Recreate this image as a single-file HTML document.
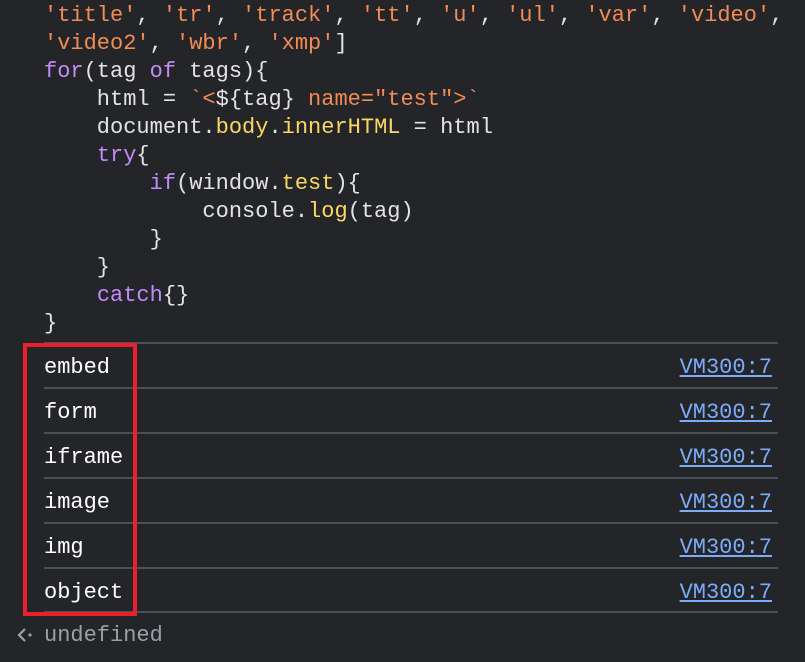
<html><head><style>
body{margin:0;background:#232529;width:805px;height:662px;overflow:hidden;font-family:"Liberation Mono",monospace;font-size:22px;color:#e3e3e3}
.code{position:absolute;left:44px;top:0;white-space:pre;line-height:28px}
.s{color:#f28b54}.k{color:#c58af9}.p{color:#fdd663}.t{color:#d5d9de}
.row{position:absolute;left:44px;width:734px;height:45px;border-top:2px solid #4a5059;box-sizing:border-box}
.row span{position:absolute;left:0;top:11px;color:#fff}
.row a{position:absolute;right:6px;top:11px;color:#7cacf8;text-decoration:underline}
.box{position:absolute;left:23px;top:343px;width:114px;height:273px;border:4px solid #e8212a;box-sizing:border-box}
</style></head><body>
<div class="code" style="top:2px"><span class="s">'title'</span>, <span class="s">'tr'</span>, <span class="s">'track'</span>, <span class="s">'tt'</span>, <span class="s">'u'</span>, <span class="s">'ul'</span>, <span class="s">'var'</span>, <span class="s">'video'</span>,
<span class="s">'video2'</span>, <span class="s">'wbr'</span>, <span class="s">'xmp'</span>]
<span class="k">for</span>(tag <span class="k">of</span> tags){
    html = <span class="s">`&lt;</span>${tag}<span class="s"> name="test"&gt;`</span>
    document.<span class="p">body</span>.<span class="p">innerHTML</span> = html
    <span class="k">try</span>{
        <span class="k">if</span>(window.<span class="p">test</span>){
            console.<span class="p">log</span>(tag)
        }
    }
    <span class="k">catch</span>{}
}</div>
<div class="row" style="top:342px"><span>embed</span><a>VM300:7</a></div>
<div class="row" style="top:387px"><span>form</span><a>VM300:7</a></div>
<div class="row" style="top:432px"><span>iframe</span><a>VM300:7</a></div>
<div class="row" style="top:477px"><span>image</span><a>VM300:7</a></div>
<div class="row" style="top:522px"><span>img</span><a>VM300:7</a></div>
<div class="row" style="top:567px"><span>object</span><a>VM300:7</a></div>
<div class="row" style="top:611px;height:2px"></div>
<div class="box"></div>
<svg style="position:absolute;left:16px;top:627px" width="18" height="16"><path d="M9 2 L3 8 L9 14" stroke="#9aa0a6" stroke-width="2.2" fill="none"/><circle cx="14" cy="8" r="1.6" fill="#9aa0a6"/></svg>
<div style="position:absolute;left:44px;top:623px;color:#9aa0a6">undefined</div>
</body></html>
